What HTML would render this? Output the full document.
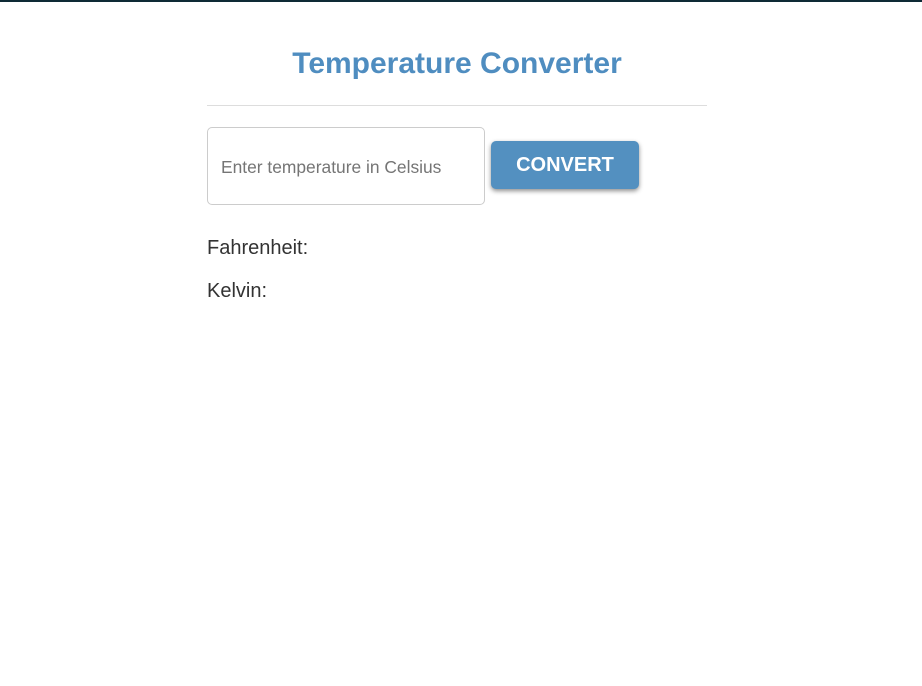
<!DOCTYPE html>
<html><head><style>
html,body{margin:0;padding:0;background:#fff;width:922px;height:686px;overflow:hidden;font-family:"Liberation Sans",Arial,sans-serif;}
.top{height:2px;background:#0e2a35;}
.c{position:absolute;left:207px;width:500px;top:0;}
h1{position:absolute;top:46px;left:0;width:500px;margin:0;text-align:center;font-size:30px;font-weight:bold;color:#4f8dc0;line-height:36px;}
hr{position:absolute;top:105px;left:0;width:500px;margin:0;border:0;border-top:1px solid #ddd;}
.in{position:absolute;top:127px;left:0;border:1px solid #ccc;border-radius:5px;box-sizing:border-box;width:278px;height:78px;}
.in span{position:absolute;left:13px;top:29px;font-size:17.4px;color:#757575;}
.btn{position:absolute;left:284px;top:141px;width:148px;height:48px;background:#5390c0;border-radius:5px;box-shadow:0 2px 5px rgba(0,0,0,.45);color:#fff;font-weight:bold;font-size:20px;text-align:center;line-height:49px;}
.r{position:absolute;left:0;font-size:20px;color:#333;}
</style></head><body>
<div class="top"></div>
<div class="c">
<h1>Temperature Converter</h1>
<hr>
<div class="in"><span>Enter temperature in Celsius</span></div>
<div class="btn">CONVERT</div>
<div class="r" style="top:237px">Fahrenheit:</div>
<div class="r" style="top:280px">Kelvin:</div>
</div>
</body></html>
